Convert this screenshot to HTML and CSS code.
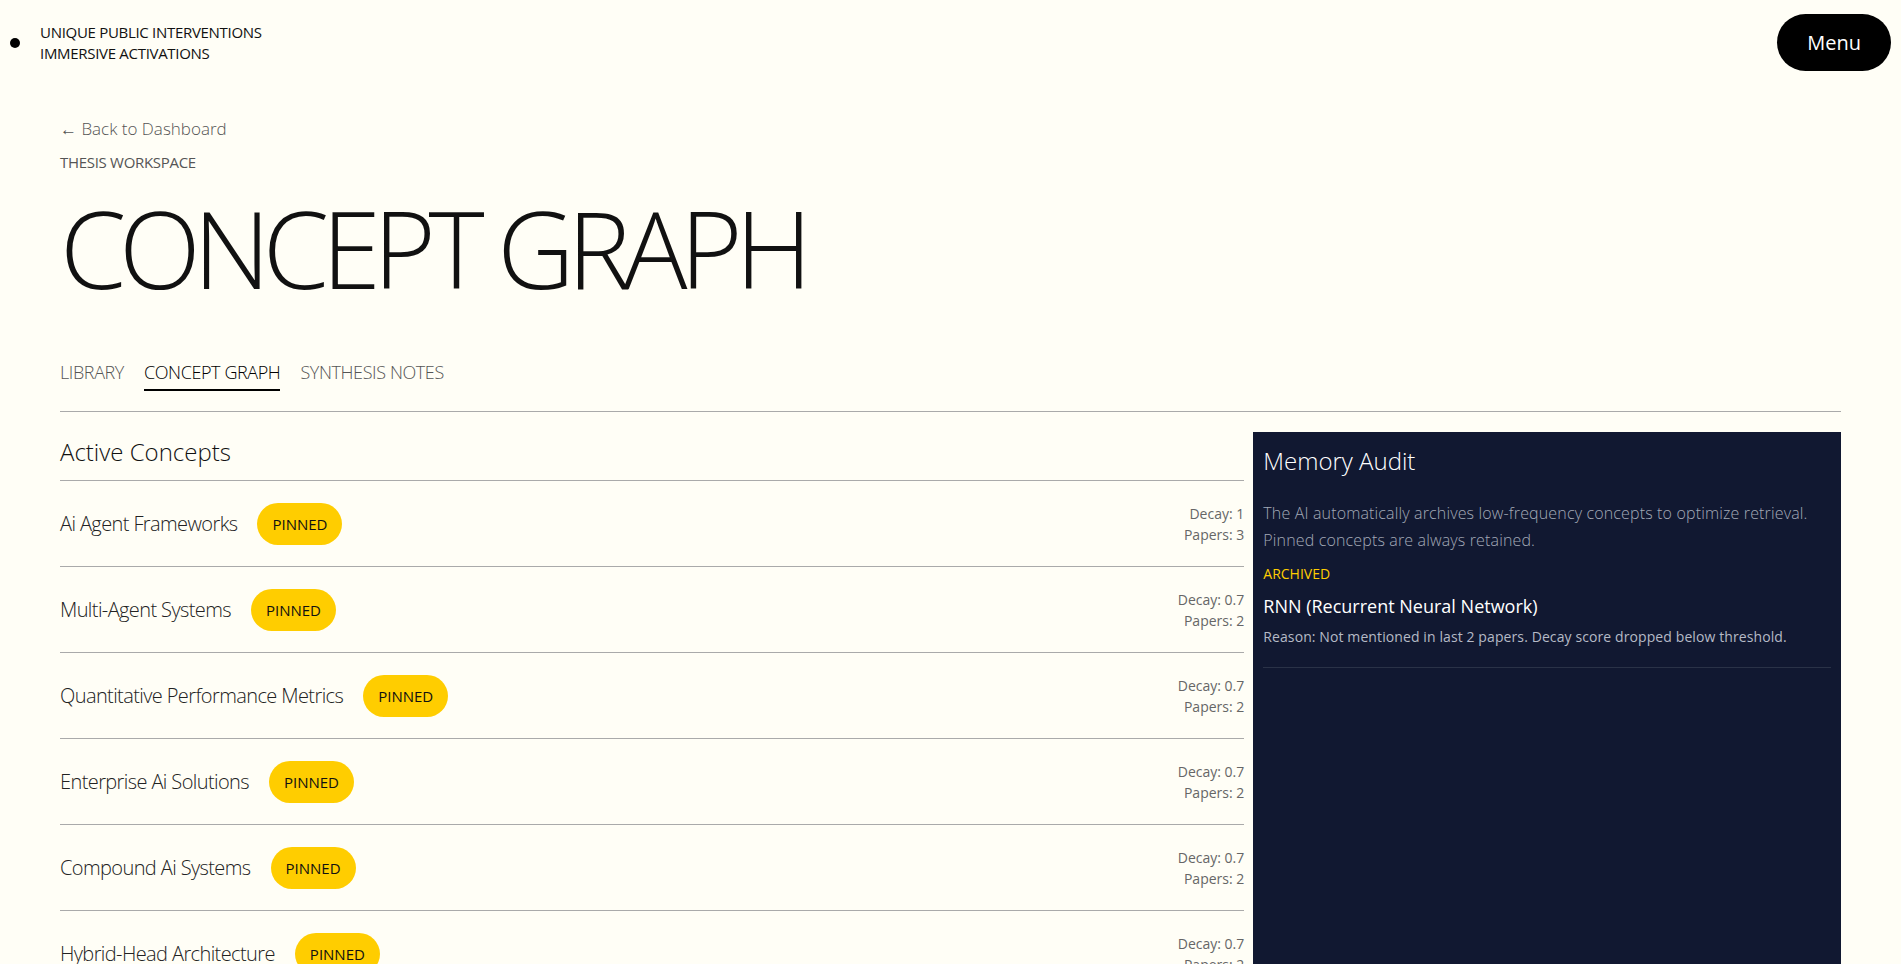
FILE: index.html
```html
<!DOCTYPE html>
<html lang="en">
<head>
    <meta charset="UTF-8">
    <meta name="viewport" content="width=device-width, initial-scale=1.0">
    <title>Concept Graph - Thesis Workspace</title>
    <link rel="stylesheet" href="styles.css">
</head>
<body>
    <header class="site-header">
        <div class="brand">
            <span class="brand-dot"></span>
            <div class="brand-text">
                UNIQUE PUBLIC INTERVENTIONS<br>
                IMMERSIVE ACTIVATIONS
            </div>
        </div>
        <button class="menu-btn">Menu</button>
    </header>

    <main class="workspace">
        <a href="#" class="back-link">← Back to Dashboard</a>
        <div class="eyebrow">THESIS WORKSPACE</div>
        <h1 class="page-title">CONCEPT GRAPH</h1>

        <nav class="tabs">
            <a href="#" class="tab">LIBRARY</a>
            <a href="#" class="tab active">CONCEPT GRAPH</a>
            <a href="#" class="tab">SYNTHESIS NOTES</a>
        </nav>

        <div class="graph-layout">
            <section class="concepts">
                <h2 class="section-title">Active Concepts</h2>

                <div class="concept-row">
                    <div class="concept-name">
                        <span>Ai Agent Frameworks</span>
                        <span class="pin-badge">PINNED</span>
                    </div>
                    <div class="concept-stats">Decay: 1<br>Papers: 3</div>
                </div>

                <div class="concept-row">
                    <div class="concept-name">
                        <span>Multi-Agent Systems</span>
                        <span class="pin-badge">PINNED</span>
                    </div>
                    <div class="concept-stats">Decay: 0.7<br>Papers: 2</div>
                </div>

                <div class="concept-row">
                    <div class="concept-name">
                        <span>Quantitative Performance Metrics</span>
                        <span class="pin-badge">PINNED</span>
                    </div>
                    <div class="concept-stats">Decay: 0.7<br>Papers: 2</div>
                </div>

                <div class="concept-row">
                    <div class="concept-name">
                        <span>Enterprise Ai Solutions</span>
                        <span class="pin-badge">PINNED</span>
                    </div>
                    <div class="concept-stats">Decay: 0.7<br>Papers: 2</div>
                </div>

                <div class="concept-row">
                    <div class="concept-name">
                        <span>Compound Ai Systems</span>
                        <span class="pin-badge">PINNED</span>
                    </div>
                    <div class="concept-stats">Decay: 0.7<br>Papers: 2</div>
                </div>

                <div class="concept-row">
                    <div class="concept-name">
                        <span>Hybrid-Head Architecture</span>
                        <span class="pin-badge">PINNED</span>
                    </div>
                    <div class="concept-stats">Decay: 0.7<br>Papers: 2</div>
                </div>
            </section>

            <aside class="audit">
                <h3 class="audit-title">Memory Audit</h3>
                <p class="audit-desc">
                    The AI automatically archives low-frequency concepts to optimize retrieval.
                    Pinned concepts are always retained.
                </p>
                <div class="archived-item">
                    <div class="archived-label">ARCHIVED</div>
                    <div class="archived-name">RNN (Recurrent Neural Network)</div>
                    <div class="archived-reason">Reason: Not mentioned in last 2 papers. Decay score dropped below threshold.</div>
                </div>
            </aside>
        </div>
    </main>
</body>
</html>
```

FILE: styles.css
```css
body {
    font-family: "Segoe UI", "Open Sans", sans-serif;
    margin: 0;
    background: #fffef6;
    color: #111;
}

a {
    text-decoration: none;
    color: inherit;
}

/* header */
.site-header {
    display: flex;
    justify-content: space-between;
    align-items: center;
    padding: 14px 10px;
}

.brand {
    display: flex;
    align-items: center;
    gap: 20px;
}

.brand-dot {
    width: 10px;
    height: 10px;
    border-radius: 50%;
    background: #000;
}

.brand-text {
    font-size: 15px;
    line-height: 21px;
    letter-spacing: -0.3px;
    color: #111;
}

.menu-btn {
    font-family: inherit;
    font-size: 20px;
    background: #000;
    color: #fff;
    border: none;
    border-radius: 999px;
    padding: 15px 30px;
    line-height: 27px;
    cursor: pointer;
}

/* main */
.workspace {
    padding: 0 60px;
}

.back-link {
    display: inline-block;
    margin-top: 32px;
    font-size: 17px;
    font-weight: 300;
    color: #555;
}

.eyebrow {
    margin-top: 12px;
    font-size: 15px;
    letter-spacing: -0.3px;
    color: #555;
}

.page-title {
    margin: 12px 0 0;
    font-size: 107px;
    font-weight: 300;
    letter-spacing: -7.5px;
    line-height: 1.2;
}

.tabs {
    display: flex;
    gap: 20px;
    margin-top: 48px;
    padding-bottom: 20px;
    border-bottom: 1px solid #aaa;
}

.tab {
    font-size: 18px;
    font-weight: 300;
    letter-spacing: -0.4px;
    color: #555;
    padding-bottom: 5px;
    border-bottom: 2px solid transparent;
}

.tab.active {
    color: #000;
    border-bottom-color: #000;
}

.graph-layout {
    display: grid;
    grid-template-columns: 1fr 33%;
    gap: 9px;
    margin-top: 20px;
}

.section-title {
    margin: 0;
    padding: 3px 0 12px;
    font-size: 24px;
    font-weight: 300;
    border-bottom: 1px solid #aaa;
}

.concept-row {
    display: flex;
    justify-content: space-between;
    align-items: center;
    padding: 21.5px 0;
    border-bottom: 1px solid #aaa;
}

.concept-name {
    display: flex;
    align-items: center;
    gap: 20px;
    font-size: 20px;
    font-weight: 300;
    letter-spacing: -0.6px;
    color: #222;
}

.pin-badge {
    background: #ffcd00;
    color: #111;
    font-size: 15px;
    font-weight: 400;
    letter-spacing: 0;
    line-height: 26px;
    padding: 8px 15px;
    border-radius: 999px;
}

.concept-stats {
    font-size: 14px;
    line-height: 21px;
    color: #666;
    text-align: right;
}

/* memory audit side panel */
.audit {
    background: #111831;
    color: #fff;
    padding: 12px 10px;
}

.audit-title {
    margin: 0 0 23px;
    font-size: 24px;
    font-weight: 300;
}

.audit-desc {
    margin: 0 0 11px;
    font-size: 16px;
    font-weight: 300;
    line-height: 26.4px;
    letter-spacing: 0.15px;
    color: #a3a9b7;
}

.archived-item {
    padding-bottom: 21px;
    border-bottom: 1px solid #2a3247;
}

.archived-label {
    font-size: 14px;
    color: #ffcd00;
}

.archived-name {
    margin-top: 11px;
    font-size: 18px;
    color: #fff;
}

.archived-reason {
    margin-top: 9px;
    font-size: 14px;
    letter-spacing: 0.1px;
    color: #b5bac6;
}
```
